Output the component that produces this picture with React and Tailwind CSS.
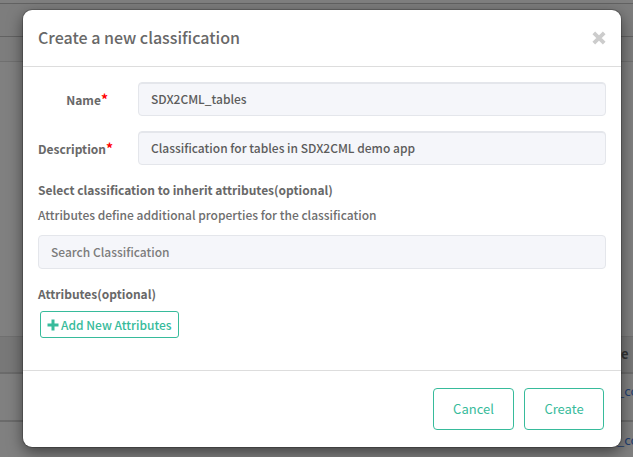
import { FaSort } from "react-icons/fa";

const inputClass =
  "block h-[34px] w-full min-w-0 rounded-[4px] border border-[#e4e6eb] bg-[#f5f6fa] px-3 pb-[2px] text-[12px] font-medium text-[#5c5c5c] outline-none placeholder:text-[#7c7c7c]";
const labelClass = "text-[12px] leading-5 font-bold text-[#686868]";

function Backdrop() {
  return (
    <div className="col-start-1 row-start-1 flex min-w-0 flex-col overflow-hidden bg-[#808080] text-[13px] leading-5">
      <div className="h-1 border-b border-[#626262]" />
      <div className="h-[33px] border-b border-[#626262] bg-[#7d7d7d]" />
      <div className="h-[25px] border-b border-[#707070] bg-[#7d7d7d]" />
      <div className="h-[274px]" />
      <table className="w-full table-fixed border-collapse">
        <thead>
          <tr className="h-9 border-t border-b-2 border-t-[#707070] border-b-[#6b6b6b] bg-[#787878]">
            <td />
            <th className="w-4 py-0 pr-0 pl-1 font-bold text-[#343434]">
              <span className="flex items-center gap-[2px]">
                e <FaSort size={11} className="shrink-0" />
              </span>
            </th>
          </tr>
        </thead>
        <tbody>
          <tr className="h-12 border-b-2 border-[#6b6b6b]">
            <td />
            <td className="p-0 pb-3">
              <a href="#first" className="text-[#1f3f70]">_co</a>
            </td>
          </tr>
          <tr>
            <td />
            <td className="p-0 pt-2">
              <a href="#second" className="text-[#1f3f70]">_co</a>
            </td>
          </tr>
        </tbody>
      </table>
    </div>
  );
}

function Field({ id, label, value }) {
  return (
    <div className="flex items-center">
      <div className="mr-[30px] w-[70px] shrink-0 pb-[2px] text-right whitespace-nowrap">
        <label htmlFor={id} className={labelClass}>
          {label}
          <span className="text-[14px] leading-4 text-[#ff0000]">*</span>
        </label>
      </div>
      <input id={id} type="text" defaultValue={value} className={`${inputClass} shadow-[inset_0_1px_0_#e4e6eb]`} />
    </div>
  );
}

export default function App() {
  return (
    <div
      className="grid min-h-screen grid-cols-1 overflow-hidden"
      style={{ fontFamily: '"Noto Sans CJK SC", "Noto Sans", sans-serif' }}
    >
      <Backdrop />
      <div className="z-10 col-start-1 row-start-1 self-start pt-[10px] pr-3 pb-[10px] pl-[23px]">
        <section
          role="dialog"
          aria-labelledby="dialog-title"
          className="rounded-[9px] bg-white shadow-[0_5px_15px_rgba(0,0,0,0.5),0_0_0_1px_rgba(0,0,0,0.2)]"
        >
          <header className="flex h-[57px] items-center justify-between border-b border-[#dddddd] px-[15px]">
            <h1 id="dialog-title" className="pb-[2px] text-[16px] leading-6 font-medium text-[#686868]">
              Create a new classification
            </h1>
            <button type="button" aria-label="Close" className="flex h-5 w-[15px] items-center justify-center">
              <svg viewBox="0 0 14 14" className="h-[14px] w-[14px]" fill="none" stroke="#cccccc" strokeWidth="3.8">
                <path d="M1.8 1.8 12.2 12.2M12.2 1.8 1.8 12.2" />
              </svg>
            </button>
          </header>
          <form className="px-[15px] pt-[15px]">
            <div className="flex flex-col gap-[15px]">
              <Field id="name" label="Name" value="SDX2CML_tables" />
              <Field id="description" label="Description" value="Classification for tables in SDX2CML demo app" />
            </div>
            <label htmlFor="search" className={`mt-[15px] block ${labelClass}`}>
              Select classification to inherit attributes(optional)
            </label>
            <p className="mt-[5px] text-[12px] leading-5 font-medium text-[#6e6e6e]">
              Attributes define additional properties for the classification
            </p>
            <div className="mt-[10px]">
              <input id="search" type="text" placeholder="Search Classification" className={inputClass} />
            </div>
            <h2 className={`mt-[15px] ${labelClass}`}>Attributes(optional)</h2>
            <button
              type="button"
              className="mt-[7px] ml-[2px] flex h-[27px] items-center gap-[2px] rounded-[3px] border border-[#37bb9b] px-[6px] text-[12px] leading-5 font-medium whitespace-nowrap text-[#37bb9b]"
            >
              <svg viewBox="0 0 12 12" className="h-3 w-3" fill="none" stroke="currentColor" strokeWidth="3">
                <path d="M.5 6h11M6 .5v11" />
              </svg>
              Add New Attributes
            </button>
          </form>
          <footer className="mt-8 flex justify-end gap-[10px] border-t border-[#dddddd] px-[17px] py-[17px] text-[13px] text-[#37bb9b]">
            <button type="button" className="h-[42px] w-[81px] rounded-[4px] border border-[#37bb9b]">
              Cancel
            </button>
            <button type="button" className="h-[42px] w-20 rounded-[4px] border border-[#37bb9b]">
              Create
            </button>
          </footer>
        </section>
      </div>
    </div>
  );
}
